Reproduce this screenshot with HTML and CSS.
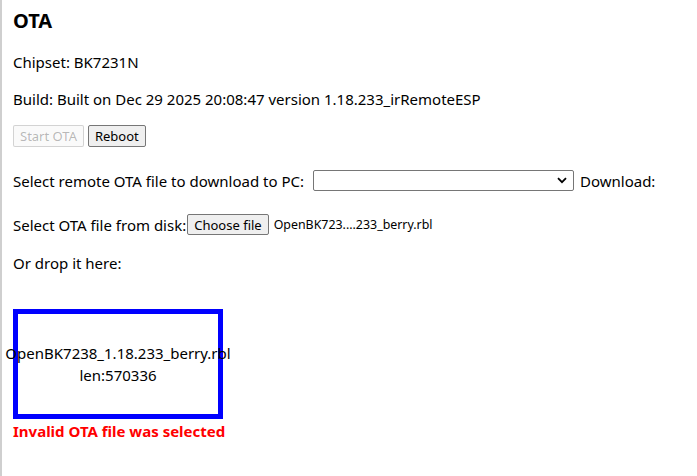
FILE: index.html
```html
<!DOCTYPE html>
<html>
<head>
<meta charset="utf-8">
<title>OTA</title>
<link rel="stylesheet" href="styles.css">
</head>
<body>
<div class="page">
  <h3 class="title">OTA</h3>
  <p class="line chip">Chipset: BK7231N</p>
  <p class="line build">Build: Built on Dec 29 2025 20:08:47 version 1.18.233_irRemoteESP</p>
  <div class="buttons">
    <button class="btn" disabled>Start OTA</button>
    <button class="btn">Reboot</button>
  </div>
  <div class="row remote">
    <span>Select remote OTA file to download to PC:</span>
    <span class="select">
      <svg class="chev" width="10" height="7" viewBox="0 0 10 7"><path d="M1 1.2 L5 5.2 L9 1.2" fill="none" stroke="#000" stroke-width="1.8"/></svg>
    </span>
    <span>Download:</span>
  </div>
  <div class="row disk">
    <span>Select OTA file from disk:</span>
    <button class="btn choose">Choose file</button>
    <span class="fname">OpenBK723....233_berry.rbl</span>
  </div>
  <p class="line drop-label">Or drop it here:</p>
  <div class="drop">
    <div>OpenBK7238_1.18.233_berry.rbl</div>
    <div>len:570336</div>
  </div>
  <div class="error">Invalid OTA file was selected</div>
</div>
</body>
</html>
```

FILE: styles.css
```css
html, body {
  margin: 0;
  padding: 0;
  background: #fff;
}

body {
  border-left: 2px solid #cfcfcf;
  min-height: 476px;
  box-sizing: border-box;
  font-family: "Noto Sans", "Open Sans", sans-serif;
  font-size: 15px;
  color: #000;
}

.page {
  padding-left: 11px;
  display: flex;
  flex-direction: column;
  align-items: flex-start;
}

.title {
  margin: 9px 0 0;
  font-size: 20px;
  line-height: 24px;
  font-weight: bold;
}

.line {
  margin: 0;
  line-height: 22px;
}

.chip { margin-top: 18px; }
.build { margin-top: 15px; }

.buttons {
  margin-top: 15px;
  display: flex;
  gap: 4px;
}

.btn {
  font-family: "Noto Sans", "Open Sans", sans-serif;
  font-size: 13px;
  line-height: 18px;
  height: 22px;
  padding: 0 6px;
  margin: 0;
  color: #000;
  background: #efefef;
  border: 1px solid #767676;
  border-radius: 2px;
}

.btn:disabled {
  color: rgba(16, 16, 16, 0.3);
  background: rgba(239, 239, 239, 0.3);
  border-color: rgba(118, 118, 118, 0.3);
}

.row {
  display: flex;
  align-items: center;
  height: 23px;
  line-height: 22px;
}

.remote { margin-top: 22px; }
.disk { margin-top: 21px; }

.select {
  margin: 0 6px 0 9px;
  width: 261px;
  height: 21px;
  box-sizing: border-box;
  border: 1px solid #767676;
  border-radius: 2px;
  background: #fff;
  display: flex;
  align-items: center;
  justify-content: flex-end;
  padding-right: 6px;
}

.choose {
  height: 21px;
  margin-left: 1px;
}

.fname {
  font-size: 12.4px;
  margin-left: 5px;
}

.drop-label { margin-top: 16px; }

.drop {
  margin-top: 35px;
  width: 200px;
  height: 100px;
  border: 5px solid #0000ff;
  display: flex;
  flex-direction: column;
  align-items: center;
  justify-content: center;
  line-height: 22px;
  white-space: nowrap;
}

.error {
  margin-top: 2px;
  line-height: 20px;
  color: #ff0000;
  font-weight: bold;
}
```
